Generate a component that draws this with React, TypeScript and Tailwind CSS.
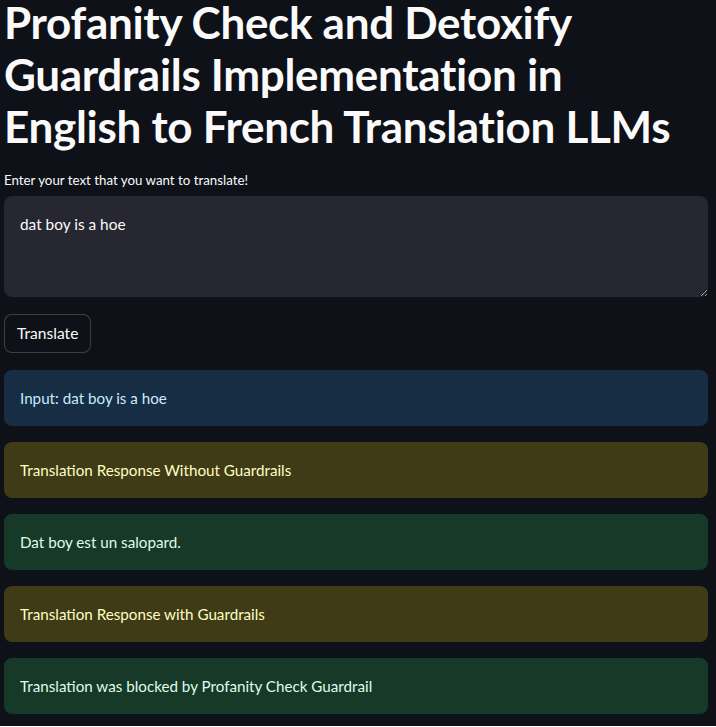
import { useState } from 'react'

const font = { fontFamily: 'Lato, "Noto Sans", sans-serif' }

const alerts = [
  { text: 'Input: dat boy is a hoe', cls: 'bg-[#172d43] text-[#c7ebff]' },
  { text: 'Translation Response Without Guardrails', cls: 'bg-[#3e3b16] text-[#ffffc2]' },
  { text: 'Dat boy est un salopard.', cls: 'bg-[#173928] text-[#dffde9]' },
  { text: 'Translation Response with Guardrails', cls: 'bg-[#3e3b16] text-[#ffffc2]' },
  { text: 'Translation was blocked by Profanity Check Guardrail', cls: 'bg-[#173928] text-[#dffde9]' },
]

export default function App() {
  const [text, setText] = useState('dat boy is a hoe')

  return (
    <div className="min-h-[727px] bg-[#0e1117] text-[#fafafa]" style={font}>
      <div className="pl-1 pr-2">
        <h1 className="-mt-[4px] text-[44px] font-bold leading-[52px] tracking-[-0.3px] text-[#fafafa]">
          Profanity Check and Detoxify
          <br />
          Guardrails Implementation in
          <br />
          English to French Translation LLMs
        </h1>

        <label className="mt-[18px] block text-[13.3px] leading-[20px] text-[#fafafa]">
          Enter your text that you want to translate!
        </label>
        <textarea
          value={text}
          onChange={(e) => setText(e.target.value)}
          className="mt-[6px] block h-[101px] w-full rounded-lg bg-[#262730] px-4 py-[16px] text-[15.4px] leading-[24px] text-[#fafafa] outline-none"
        />

        <button className="mt-[17px] block h-[39px] rounded-lg border border-[#fafafa33] bg-[#0e1117] px-3 text-[15.6px] text-[#fafafa]">
          Translate
        </button>

        <div className="mt-[17px] flex flex-col gap-4 pb-3">
          {alerts.map((a) => (
            <div key={a.text} className={`rounded-lg px-4 py-4 text-[15.2px] leading-[24px] ${a.cls}`}>
              {a.text}
            </div>
          ))}
        </div>
      </div>
    </div>
  )
}
